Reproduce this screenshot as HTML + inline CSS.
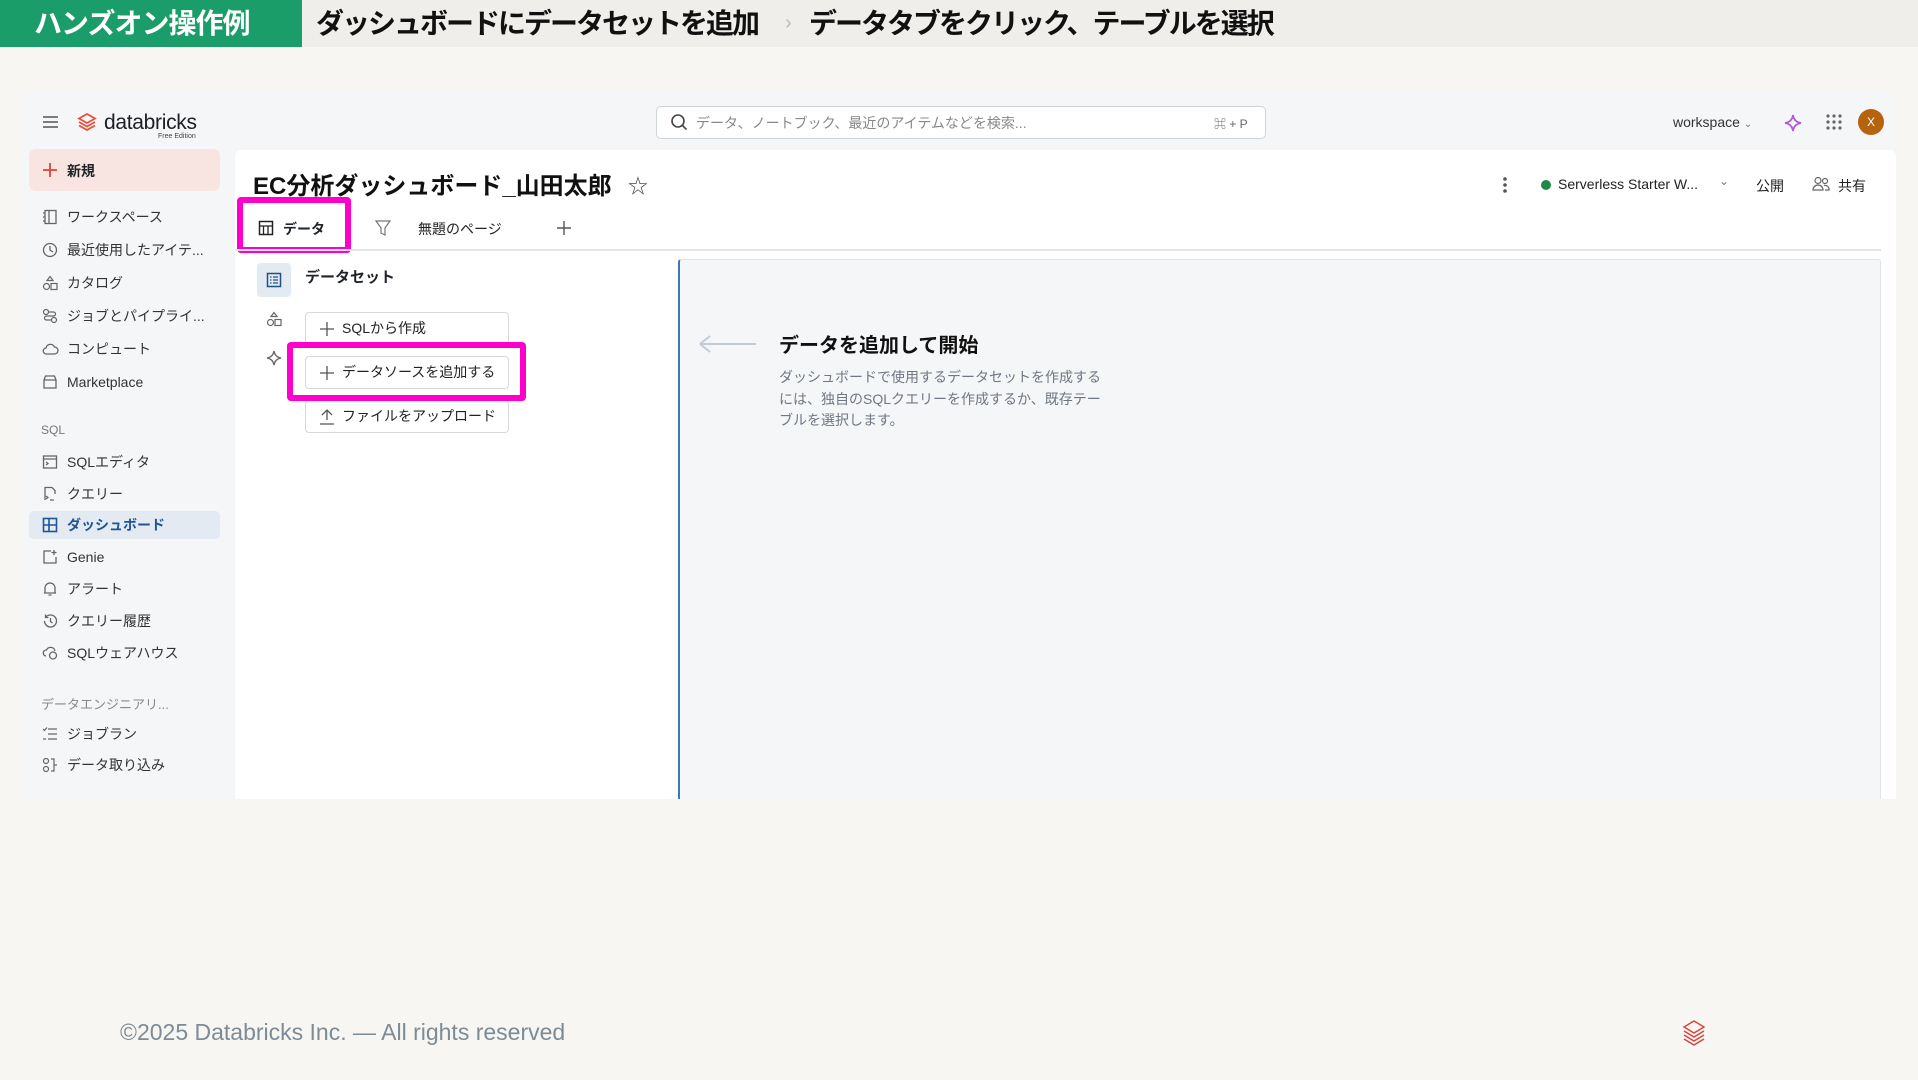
<!DOCTYPE html>
<html><head><meta charset="utf-8">
<style>
*{margin:0;padding:0;box-sizing:border-box}
body{width:1918px;height:1080px;background:#f7f6f2;font-family:"Liberation Sans","Noto Sans CJK JP",sans-serif;position:relative;overflow:hidden;color:#1f2328}
.a{position:absolute;white-space:nowrap}
.hdr{left:0;top:0;width:1918px;height:47px;background:#efeeeb}
.green{left:0;top:0;width:302px;height:47px;background:#1a9d68;color:#fff;font-size:28px;font-weight:700;line-height:47px;padding-left:34px;letter-spacing:-1px}
.ht{font-size:28px;font-weight:700;line-height:47px;top:0;letter-spacing:-2px;color:#111}
.app{left:22px;top:92px;width:1874px;height:707px;background:#f5f6f8}
.si{left:67px;font-size:14px;color:#333;transform:translateY(-50%)}
.ic{position:absolute;left:42px;transform:translateY(-50%)}
.main{left:235px;top:150px;width:1661px;height:649px;background:#fff;border-radius:6px 6px 0 0}
.btn{left:305px;width:204px;height:33px;border:1px solid #d5d9de;border-radius:4px;background:#fff;font-size:14px;line-height:31px;padding-left:14px;color:#222}
.mag{border:6px solid #ff00cc;border-radius:4px}
</style></head><body>
<div class="a hdr"></div>
<div class="a green">ハンズオン操作例</div>
<div class="a ht" style="left:316px">ダッシュボードにデータセットを追加</div>
<div class="a" style="left:785px;top:12px;color:#bbb;font-size:20px">›</div>
<div class="a ht" style="left:809px">データタブをクリック、テーブルを選択</div>

<div class="a app"></div>
<svg class="a" style="left:42px;top:115px" width="17" height="14"><path d="M1 2h15M1 7h15M1 12h15" stroke="#555" stroke-width="1.6"/></svg>
<svg class="a" style="left:77px;top:112px" width="20" height="20" viewBox="0 0 20 20"><path d="M10 2l8 4.5-8 4.5-8-4.5z M2 10l8 4.5 8-4.5 M2 13.5l8 4.5 8-4.5" fill="none" stroke="#e8503a" stroke-width="1.8"/></svg>
<div class="a" style="left:104px;top:111px;font-size:21px;color:#1b1f23;letter-spacing:-0.3px">databricks</div>
<div class="a" style="left:158px;top:133px;font-size:7px;color:#444">Free Edition</div>
<div class="a" style="left:656px;top:106px;width:610px;height:33px;background:#fff;border:1px solid #cfd4da;border-radius:5px"></div>
<svg class="a" style="left:670px;top:113px" width="18" height="18"><circle cx="8" cy="8" r="6" fill="none" stroke="#444" stroke-width="1.6"/><path d="M12.5 12.5l4 4" stroke="#444" stroke-width="1.6"/></svg>
<div class="a" style="left:696px;top:113px;font-size:14px;color:#888">データ、ノートブック、最近のアイテムなどを検索...</div>
<div class="a" style="left:1214px;top:115px;font-size:12px;color:#666">⌘ + P</div>
<div class="a" style="left:1673px;top:114px;font-size:14px;color:#333">workspace <span style="font-size:10px;color:#777">⌄</span></div>
<svg class="a" style="left:1784px;top:114px" width="18" height="18"><path d="M9 1Q10 8 17 9Q10 10 9 17Q8 10 1 9Q8 8 9 1z" fill="none" stroke="#b05ad8" stroke-width="1.8"/></svg>
<svg class="a" style="left:1826px;top:114px" width="16" height="16" fill="#666"><circle cx="2" cy="2" r="1.6"/><circle cx="8" cy="2" r="1.6"/><circle cx="14" cy="2" r="1.6"/><circle cx="2" cy="8" r="1.6"/><circle cx="8" cy="8" r="1.6"/><circle cx="14" cy="8" r="1.6"/><circle cx="2" cy="14" r="1.6"/><circle cx="8" cy="14" r="1.6"/><circle cx="14" cy="14" r="1.6"/></svg>
<div class="a" style="left:1858px;top:109px;width:26px;height:26px;border-radius:50%;background:#b5630f;color:#fff;font-size:12px;text-align:center;line-height:26px">X</div>

<div class="a" style="left:29px;top:149px;width:191px;height:42px;background:#f8e4e1;border-radius:7px"></div>
<svg class="a" style="left:42px;top:162px" width="16" height="16"><path d="M8 1v14M1 8h14" stroke="#e0413a" stroke-width="1.8"/></svg>
<div class="a" style="left:67px;top:161px;font-size:14px;font-weight:700">新規</div>

<svg class="ic" style="top:217px" width="16" height="16"><rect x="3" y="1.5" width="11" height="13" fill="none" stroke="#666" stroke-width="1.3"/><path d="M7 1.5v13M1 4h2M1 8h2M1 12h2" stroke="#666" stroke-width="1.3"/></svg>
<div class="a si" style="top:217px">ワークスペース</div>
<svg class="ic" style="top:250px" width="16" height="16"><circle cx="8" cy="8" r="6.5" fill="none" stroke="#666" stroke-width="1.3"/><path d="M8 4v4l3 2" fill="none" stroke="#666" stroke-width="1.3"/></svg>
<div class="a si" style="top:250px">最近使用したアイテ...</div>
<svg class="ic" style="top:283px" width="16" height="16"><path d="M8 1.5l3 4H5z" fill="none" stroke="#666" stroke-width="1.2"/><circle cx="4.5" cy="11.5" r="3" fill="none" stroke="#666" stroke-width="1.2"/><rect x="9" y="8.5" width="6" height="6" fill="none" stroke="#666" stroke-width="1.2"/></svg>
<div class="a si" style="top:283px">カタログ</div>
<svg class="ic" style="top:316px" width="16" height="16"><circle cx="4" cy="4" r="2.5" fill="none" stroke="#666" stroke-width="1.2"/><circle cx="12" cy="12" r="2.5" fill="none" stroke="#666" stroke-width="1.2"/><path d="M6.5 4h5a2 2 0 010 4h-7a2 2 0 000 4h5" fill="none" stroke="#666" stroke-width="1.2"/></svg>
<div class="a si" style="top:316px">ジョブとパイプライ...</div>
<svg class="ic" style="top:349px" width="17" height="16"><path d="M4.5 13h8a3.5 3.5 0 000-7 4.5 4.5 0 00-8.5 1A3 3 0 004.5 13z" fill="none" stroke="#666" stroke-width="1.3"/></svg>
<div class="a si" style="top:349px">コンピュート</div>
<svg class="ic" style="top:382px" width="16" height="16"><path d="M2 6l1.5-4h9L14 6v8H2z M2 6h12" fill="none" stroke="#666" stroke-width="1.3"/></svg>
<div class="a si" style="top:382px">Marketplace</div>

<div class="a" style="left:41px;top:423px;font-size:12px;color:#777">SQL</div>
<svg class="ic" style="top:462px" width="16" height="16"><rect x="1.5" y="2" width="13" height="12" fill="none" stroke="#666" stroke-width="1.3"/><path d="M1.5 5h13M4 8l2 1.5L4 11" fill="none" stroke="#666" stroke-width="1.2"/></svg>
<div class="a si" style="top:462px">SQLエディタ</div>
<svg class="ic" style="top:494px" width="16" height="16"><path d="M3 14V1.5h7l3 3V8" fill="none" stroke="#666" stroke-width="1.3"/><path d="M4 10l2 1.5L4 13M8 14h4" fill="none" stroke="#666" stroke-width="1.2"/></svg>
<div class="a si" style="top:494px">クエリー</div>
<div class="a" style="left:29px;top:511px;width:191px;height:28px;background:#e4eaf2;border-radius:5px"></div>
<svg class="ic" style="top:525px" width="16" height="16"><rect x="1.5" y="1.5" width="13" height="13" fill="none" stroke="#1f5593" stroke-width="1.6"/><path d="M7 1.5v13M7 8h7.5M1.5 8h5.5" stroke="#1f5593" stroke-width="1.6"/></svg>
<div class="a si" style="top:525px;color:#1f5593;font-weight:700">ダッシュボード</div>
<svg class="ic" style="top:557px" width="16" height="16"><path d="M14 8v6H2V2h7" fill="none" stroke="#666" stroke-width="1.3"/><path d="M12 1v5M9.5 3.5h5" stroke="#666" stroke-width="1.3"/></svg>
<div class="a si" style="top:557px">Genie</div>
<svg class="ic" style="top:589px" width="16" height="16"><path d="M3 12V7a5 5 0 0110 0v5H2h12M6.5 14h3" fill="none" stroke="#666" stroke-width="1.3"/></svg>
<div class="a si" style="top:589px">アラート</div>
<svg class="ic" style="top:621px" width="16" height="16"><path d="M2.5 8a6 6 0 106-6 6 6 0 00-5 2.5M3.5 1.5v3h3M8.5 5v3.5l2 1.5" fill="none" stroke="#666" stroke-width="1.3"/></svg>
<div class="a si" style="top:621px">クエリー履歴</div>
<svg class="ic" style="top:653px" width="17" height="16"><path d="M4 11a3 3 0 01.5-6 4.5 4.5 0 018.5 1" fill="none" stroke="#666" stroke-width="1.3"/><ellipse cx="11" cy="10.5" rx="3.5" ry="3.5" fill="none" stroke="#666" stroke-width="1.3"/></svg>
<div class="a si" style="top:653px">SQLウェアハウス</div>

<div class="a" style="left:41px;top:694px;font-size:13px;color:#888">データエンジニアリ...</div>
<svg class="ic" style="top:734px" width="16" height="16"><path d="M6 3h9M6 8h9M6 13h9M1 3l1.5 1.5L5 1.5M1 13h3" fill="none" stroke="#666" stroke-width="1.2"/></svg>
<div class="a si" style="top:734px">ジョブラン</div>
<svg class="ic" style="top:765px" width="16" height="16"><circle cx="4" cy="4" r="2.5" fill="none" stroke="#666" stroke-width="1.2"/><circle cx="4" cy="12" r="2.5" fill="none" stroke="#666" stroke-width="1.2"/><path d="M9 2h3v12H9M12 8h3" fill="none" stroke="#666" stroke-width="1.2"/></svg>
<div class="a si" style="top:765px">データ取り込み</div>

<div class="a main"></div>
<div class="a" style="left:253px;top:166px;font-size:24px;font-weight:700;color:#111">EC分析ダッシュボード_山田太郎</div>
<div class="a" style="left:628px;top:170px;font-size:20px;color:#444">☆</div>
<svg class="a" style="left:1502px;top:176px" width="6" height="18" fill="#555"><circle cx="3" cy="3" r="1.8"/><circle cx="3" cy="9" r="1.8"/><circle cx="3" cy="15" r="1.8"/></svg>
<div class="a" style="left:1541px;top:180px;width:10px;height:10px;border-radius:50%;background:#1e8a46"></div>
<div class="a" style="left:1558px;top:176px;font-size:14px;color:#222">Serverless Starter W...</div>
<div class="a" style="left:1719px;top:174px;font-size:12px;color:#777">⌄</div>
<div class="a" style="left:1756px;top:176px;font-size:14px;color:#222">公開</div>
<svg class="a" style="left:1812px;top:176px" width="18" height="16"><circle cx="6" cy="4.5" r="3" fill="none" stroke="#666" stroke-width="1.2"/><path d="M1 14a5 5 0 0110 0z" fill="none" stroke="#666" stroke-width="1.2"/><circle cx="13" cy="5" r="2.5" fill="none" stroke="#666" stroke-width="1.2"/><path d="M12 9.5a4 4 0 015 4.5h-4" fill="none" stroke="#666" stroke-width="1.2"/></svg>
<div class="a" style="left:1838px;top:176px;font-size:14px;color:#222">共有</div>

<div class="a mag" style="left:237px;top:197px;width:114px;height:56px"></div>
<svg class="a" style="left:258px;top:220px" width="16" height="16"><rect x="1.5" y="1.5" width="13" height="13" fill="none" stroke="#222" stroke-width="1.5"/><path d="M1.5 6h13M5.5 6v8.5M10 6v8.5" stroke="#222" stroke-width="1.3"/></svg>
<div class="a" style="left:283px;top:219px;font-size:14px;font-weight:700">データ</div>
<svg class="a" style="left:375px;top:219px" width="16" height="18"><path d="M1 2h14l-5 7v7l-4-2V9z" fill="none" stroke="#777" stroke-width="1.2"/></svg>
<div class="a" style="left:418px;top:219px;font-size:14px;color:#222">無題のページ</div>
<svg class="a" style="left:556px;top:220px" width="16" height="16"><path d="M8 1v14M1 8h14" stroke="#555" stroke-width="1.4"/></svg>
<div class="a" style="left:235px;top:249px;width:1646px;height:2px;background:#e2e5e9"></div>

<div class="a" style="left:257px;top:263px;width:34px;height:34px;background:#e4eaf2;border-radius:4px"></div>
<svg class="a" style="left:266px;top:272px" width="16" height="16"><rect x="1.5" y="1.5" width="13" height="13" fill="none" stroke="#1f4f85" stroke-width="1.5"/><path d="M4 5h1.5M7 5h5M4 8h1.5M7 8h5M4 11h1.5M7 11h5" stroke="#1f4f85" stroke-width="1.3"/></svg>
<div class="a" style="left:305px;top:266px;font-size:15px;font-weight:700">データセット</div>
<svg class="a" style="left:266px;top:311px" width="16" height="16"><path d="M8 1.5l3 4H5z" fill="none" stroke="#666" stroke-width="1.2"/><circle cx="4.5" cy="11.5" r="3" fill="none" stroke="#666" stroke-width="1.2"/><rect x="9" y="8.5" width="6" height="6" fill="none" stroke="#666" stroke-width="1.2"/></svg>
<svg class="a" style="left:266px;top:350px" width="16" height="16"><path d="M8 1Q9 7 15 8Q9 9 8 15Q7 9 1 8Q7 7 8 1z" fill="none" stroke="#666" stroke-width="1.3"/></svg>

<svg class="a" style="left:319px;top:321px" width="16" height="16"><path d="M8 1v14M1 8h14" stroke="#555" stroke-width="1.3"/></svg>
<svg class="a" style="left:319px;top:365px" width="16" height="16"><path d="M8 1v14M1 8h14" stroke="#555" stroke-width="1.3"/></svg>
<svg class="a" style="left:319px;top:408px" width="16" height="18"><path d="M8 12V2M3 7l5-5 5 5M1 16h14" fill="none" stroke="#555" stroke-width="1.3"/></svg>
<div class="a btn" style="top:312px;padding-left:36px">SQLから作成</div>
<div class="a btn" style="top:356px;padding-left:36px">データソースを追加する</div>
<div class="a btn" style="top:400px;padding-left:36px">ファイルをアップロード</div>
<svg class="a" style="left:319px;top:321px" width="16" height="16"><path d="M8 1v14M1 8h14" stroke="#555" stroke-width="1.3"/></svg>
<svg class="a" style="left:319px;top:365px" width="16" height="16"><path d="M8 1v14M1 8h14" stroke="#555" stroke-width="1.3"/></svg>
<svg class="a" style="left:319px;top:408px" width="16" height="18"><path d="M8 12V2M3 7l5-5 5 5M1 16h14" fill="none" stroke="#555" stroke-width="1.3"/></svg>
<div class="a mag" style="left:287px;top:342px;width:239px;height:59px"></div>

<div class="a" style="left:678px;top:259px;width:1203px;height:540px;background:#f5f6f8;border:1px solid #dfe2e6;border-left:2px solid #3b76bf;border-bottom:none;border-radius:3px 3px 0 0"></div>
<svg class="a" style="left:698px;top:334px" width="60" height="20"><path d="M2 10h56M2 10l10-8M2 10l10 8" fill="none" stroke="#c3ccd6" stroke-width="2"/></svg>
<div class="a" style="left:779px;top:329px;font-size:20px;font-weight:700;color:#111">データを追加して開始</div>
<div class="a" style="left:779px;top:367px;font-size:14px;color:#6f7782;line-height:21.5px;white-space:normal;width:326px">ダッシュボードで使用するデータセットを作成するには、独自のSQLクエリーを作成するか、既存テーブルを選択します。</div>

<div class="a" style="left:120px;top:1019px;font-size:23px;color:#7d8b95">©2025 Databricks Inc. — All rights reserved</div>
<svg class="a" style="left:1682px;top:1020px" width="24" height="28" viewBox="0 0 24 28"><path d="M12 1l10 6-10 6L2 7z M2 11l10 6 10-6 M2 15l10 6 10-6 M2 19l10 6 10-6" fill="none" stroke="#d8433a" stroke-width="1.4"/></svg>
</body></html>
